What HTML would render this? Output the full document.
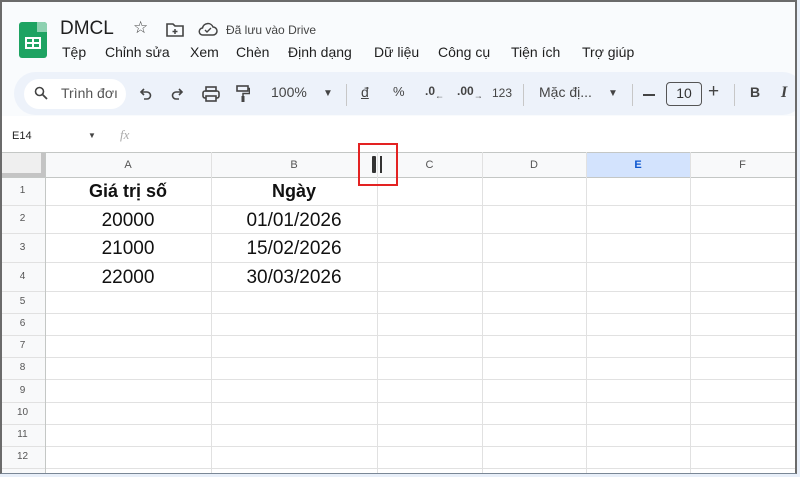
<!DOCTYPE html>
<html><head><meta charset="utf-8"><style>
*{margin:0;padding:0;box-sizing:border-box}
body{width:800px;height:477px;background:#e8eff9;position:relative;overflow:hidden;font-family:"Liberation Sans",Arial,sans-serif;color:#1f1f1f}
#frame{position:absolute;left:0;top:0;width:797px;height:474px;background:#fff;overflow:hidden}
#border{position:absolute;left:0;top:0;width:797px;height:474px;border:2px solid #6b6b6b;border-bottom:1px solid #7a8796;pointer-events:none}
.abs{position:absolute}
#top{position:absolute;left:0;top:0;width:800px;height:150px;background:#f9fbfd}
.tb{position:absolute;top:84px;font-size:14px;color:#444}
.vl{position:absolute;background:#e1e1e1;width:1px}
.hl{position:absolute;background:#e1e1e1;height:1px;left:0;width:800px}
.rn{position:absolute;left:0;width:45px;text-align:center;font-size:10px;color:#555}
.ch{position:absolute;top:153px;height:24px;line-height:24px;text-align:center;font-size:11px;color:#555}
.cell{position:absolute;text-align:center;font-size:19px;color:#111}
</style></head><body>
<div id="frame">
<div id="top"></div>
<div class="abs" style="left:19px;top:22px;width:28px;height:36px;background:#1ea362;border-radius:3px"></div>
<div class="abs" style="left:37px;top:22px;width:10px;height:10px;background:#8ed1b1;border-radius:0 3px 0 0"></div>
<div class="abs" style="left:25px;top:37px;width:16px;height:12px;border:2px solid #fff;"></div>
<div class="abs" style="left:32px;top:37px;width:2px;height:12px;background:#fff"></div>
<div class="abs" style="left:25px;top:42px;width:16px;height:2px;background:#fff"></div>
<div class="abs" style="left:60px;top:18px;font-size:19px;color:#1f1f1f">DMCL</div>
<div class="abs" style="left:133px;top:18px;font-size:17px;color:#444">☆</div>
<svg class="abs" style="left:166px;top:22px" width="18" height="15" viewBox="0 0 18 15"><path d="M1 2h6l2 2h8v10H1z" fill="none" stroke="#444" stroke-width="1.6"/><path d="M9 7v5M6.5 9.5h5" stroke="#444" stroke-width="1.5"/></svg>
<svg class="abs" style="left:198px;top:22px" width="20" height="14" viewBox="0 0 20 14"><path d="M5 13h10a4 4 0 0 0 0-8 5.5 5.5 0 0 0-10.5 1A3.5 3.5 0 0 0 5 13z" fill="none" stroke="#444" stroke-width="1.5"/><path d="M7 8l2 2 4-4" fill="none" stroke="#444" stroke-width="1.4"/></svg>
<div class="abs" style="left:226px;top:23px;font-size:12px;color:#444">Đã lưu vào Drive</div>
<div class="abs" style="left:62px;top:44px;font-size:14px;color:#1f1f1f;white-space:nowrap">
<span style="position:absolute;left:0">Tệp</span><span style="position:absolute;left:43px">Chỉnh sửa</span><span style="position:absolute;left:128px">Xem</span><span style="position:absolute;left:174px">Chèn</span><span style="position:absolute;left:226px">Định dạng</span><span style="position:absolute;left:312px">Dữ liệu</span><span style="position:absolute;left:376px">Công cụ</span><span style="position:absolute;left:449px">Tiện ích</span><span style="position:absolute;left:520px">Trợ giúp</span></div>
<div class="abs" style="left:14px;top:72px;width:790px;height:43px;background:#edf2fa;border-radius:22px"></div>
<div class="abs" style="left:24px;top:79px;width:102px;height:30px;background:#fff;border-radius:15px"></div>
<svg class="abs" style="left:34px;top:86px" width="14" height="14" viewBox="0 0 14 14"><circle cx="5.5" cy="5.5" r="4" fill="none" stroke="#444" stroke-width="1.6"/><path d="M8.5 8.5l4.5 4.5" stroke="#444" stroke-width="1.8"/></svg>
<div class="tb" style="left:61px;top:85px;color:#555">Trình đơı</div>
<svg class="abs" style="left:138px;top:87px" width="14" height="14" viewBox="0 0 14 14"><path d="M4 5h5a3.5 3.5 0 0 1 0 7H6" fill="none" stroke="#444" stroke-width="1.6"/><path d="M6 2L3 5l3 3" fill="none" stroke="#444" stroke-width="1.6"/></svg>
<svg class="abs" style="left:171px;top:87px" width="14" height="14" viewBox="0 0 14 14"><path d="M10 5H5a3.5 3.5 0 0 0 0 7h3" fill="none" stroke="#444" stroke-width="1.6"/><path d="M8 2l3 3-3 3" fill="none" stroke="#444" stroke-width="1.6"/></svg>
<svg class="abs" style="left:202px;top:86px" width="18" height="16" viewBox="0 0 18 16"><rect x="4" y="1" width="10" height="4" fill="none" stroke="#444" stroke-width="1.6"/><rect x="1" y="5" width="16" height="7" rx="2" fill="none" stroke="#444" stroke-width="1.6"/><rect x="4" y="10" width="10" height="5" fill="#edf2fa" stroke="#444" stroke-width="1.6"/></svg>
<svg class="abs" style="left:236px;top:85px" width="14" height="18" viewBox="0 0 14 18"><rect x="1" y="1" width="11" height="5" fill="none" stroke="#444" stroke-width="1.6"/><path d="M12 3.5h1.5v5H7v3" fill="none" stroke="#444" stroke-width="1.5"/><rect x="5.5" y="11" width="3" height="6" fill="#444"/></svg>
<div class="tb" style="left:271px">100%</div>
<div class="tb" style="left:323px;font-size:10px;top:88px">▼</div>
<div class="abs" style="left:346px;top:84px;width:1px;height:22px;background:#c7c7c7"></div>
<div class="tb" style="left:361px;text-decoration:underline">đ</div>
<div class="tb" style="left:393px;font-size:13px">%</div>
<div class="tb" style="left:425px;font-size:12px;font-weight:bold">.0<sub style="font-size:9px">←</sub></div>
<div class="tb" style="left:457px;font-size:12px;font-weight:bold">.00<sub style="font-size:9px">→</sub></div>
<div class="tb" style="left:492px;font-size:12px;top:86px">123</div>
<div class="abs" style="left:523px;top:84px;width:1px;height:22px;background:#c7c7c7"></div>
<div class="tb" style="left:539px">Mặc đị...</div>
<div class="tb" style="left:608px;font-size:10px;top:88px">▼</div>
<div class="abs" style="left:632px;top:84px;width:1px;height:22px;background:#c7c7c7"></div>
<div class="abs" style="left:643px;top:94px;width:12px;height:2px;background:#444"></div>
<div class="abs" style="left:666px;top:82px;width:36px;height:24px;border:1.5px solid #555;border-radius:4px;text-align:center;line-height:21px;font-size:14px;color:#333">10</div>
<div class="tb" style="left:708px;font-size:19px;top:81px">+</div>
<div class="abs" style="left:734px;top:84px;width:1px;height:22px;background:#c7c7c7"></div>
<div class="tb" style="left:750px;font-weight:bold">B</div>
<div class="tb" style="left:781px;font-style:italic;font-weight:bold;font-family:'Liberation Serif',serif;font-size:16px">I</div>
<div class="abs" style="left:0;top:116px;width:800px;height:36px;background:#fff"></div>
<div class="abs" style="left:12px;top:130px;font-size:11px;color:#222">E14</div>
<div class="abs" style="left:88px;top:131px;font-size:8px;color:#444">▼</div>
<div class="abs" style="left:120px;top:127px;font-size:13px;color:#aaa;font-style:italic;font-family:'Liberation Serif',serif">fx</div>
<div class="abs" style="left:0;top:152px;width:800px;height:25px;background:#f8f9fa"></div>
<div class="abs" style="left:0;top:152px;width:45px;height:325px;background:#f8f9fa"></div>
<div class="abs" style="left:0;top:152px;width:45px;height:25px;background:#efefef;border-right:4px solid #c4c4c4;border-bottom:4px solid #c4c4c4"></div>
<div class="abs" style="left:586px;top:152px;width:104px;height:25px;background:#d3e3fd"></div>
<div class="hl" style="top:152px;background:#c4c7c5"></div>
<div class="hl" style="top:177px;background:#c4c7c5"></div>
<div class="hl" style="top:205px"></div><div class="hl" style="top:233px"></div><div class="hl" style="top:262px"></div><div class="hl" style="top:291px"></div>
<div class="hl" style="top:313px"></div><div class="hl" style="top:335px"></div><div class="hl" style="top:357px"></div><div class="hl" style="top:379px"></div><div class="hl" style="top:402px"></div><div class="hl" style="top:424px"></div><div class="hl" style="top:446px"></div><div class="hl" style="top:468px"></div>
<div class="vl" style="left:45px;top:152px;height:325px;background:#c4c7c5"></div>
<div class="vl" style="left:211px;top:152px;height:325px"></div>
<div class="vl" style="left:377px;top:152px;height:325px"></div>
<div class="vl" style="left:482px;top:152px;height:325px"></div>
<div class="vl" style="left:586px;top:152px;height:325px"></div>
<div class="vl" style="left:690px;top:152px;height:325px"></div>
<div class="ch" style="left:45px;width:166px">A</div>
<div class="ch" style="left:211px;width:166px">B</div>
<div class="ch" style="left:377px;width:105px">C</div>
<div class="ch" style="left:482px;width:104px">D</div>
<div class="ch" style="left:586px;width:104px;color:#0b57d0;font-weight:bold">E</div>
<div class="ch" style="left:690px;width:105px">F</div>
<div class="rn" style="top:185px">1</div><div class="rn" style="top:213px">2</div><div class="rn" style="top:242px">3</div><div class="rn" style="top:271px">4</div>
<div class="rn" style="top:296px">5</div><div class="rn" style="top:318px">6</div><div class="rn" style="top:340px">7</div><div class="rn" style="top:362px">8</div><div class="rn" style="top:385px">9</div><div class="rn" style="top:407px">10</div><div class="rn" style="top:429px">11</div><div class="rn" style="top:451px">12</div>
<div class="cell" style="left:45px;width:166px;top:181px;font-weight:bold;font-size:18px">Giá trị số</div>
<div class="cell" style="left:211px;width:166px;top:181px;font-weight:bold;font-size:18px">Ngày</div>
<div class="cell" style="left:45px;width:166px;top:210px">20000</div>
<div class="cell" style="left:211px;width:166px;top:210px">01/01/2026</div>
<div class="cell" style="left:45px;width:166px;top:238px">21000</div>
<div class="cell" style="left:211px;width:166px;top:238px">15/02/2026</div>
<div class="cell" style="left:45px;width:166px;top:267px">22000</div>
<div class="cell" style="left:211px;width:166px;top:267px">30/03/2026</div>
<div class="abs" style="left:372px;top:156px;width:4px;height:17px;background:#333;border-radius:1px"></div>
<div class="abs" style="left:380px;top:156px;width:2px;height:17px;background:#333"></div>
<div class="abs" style="left:358px;top:143px;width:40px;height:43px;border:2px solid #e32222"></div>
</div>
<div id="border"></div>
</body></html>
